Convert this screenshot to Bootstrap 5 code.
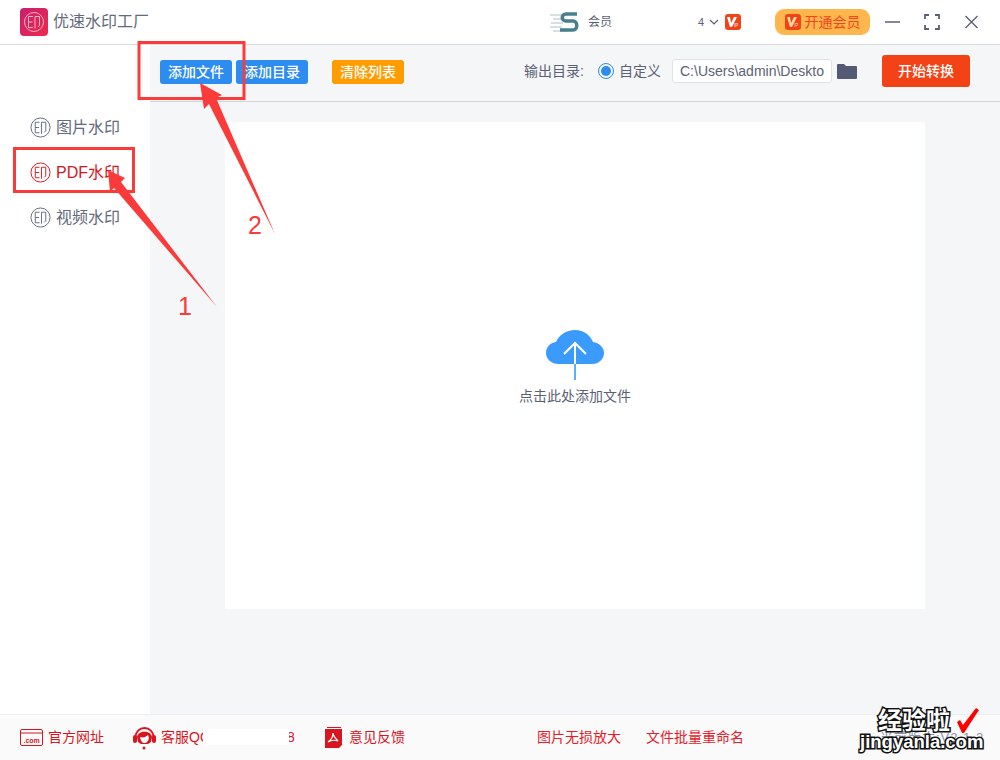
<!DOCTYPE html>
<html lang="zh-CN">
<head>
    <meta charset="UTF-8">
    <meta name="viewport" content="width=device-width, initial-scale=1.0">
    <title>优速水印工厂</title>
    <link rel="stylesheet" href="https://cdn.jsdelivr.net/npm/bootstrap@5.3.0/dist/css/bootstrap.min.css">
    <style>
        html, body { margin: 0; height: 760px; overflow: hidden; }
        body {
            position: relative;
            width: 1000px;
            font-family: "Liberation Sans", "Noto Sans CJK SC", sans-serif;
            color: #5a6175;
            background: #fff;
        }
        .app-frame { width: 1000px; height: 760px; }
        .title-bar { height: 45px; border-bottom: 1px solid #dcdcdc; padding-left: 20px; }
        .app-logo {
            width: 28px; height: 28px; border-radius: 4px;
            background: linear-gradient(135deg, #c81f6e, #ee2a4e);
        }
        .app-name { font-size: 16px; margin-left: 5px; width: 497px; color: #626a7c; }
        .member-name { font-size: 12px; margin-left: 8px; width: 110px; }
        .member-count { font-size: 11px; width: 7px; }
        .vip-small { margin-left: 6px; }
        .vip-chip {
            width: 95px; height: 26px; border-radius: 9px; margin-left: 34px;
            background: #ffb64d; color: #f2451c; font-size: 14px;
        }
        .win-btns { margin-left: 15px; gap: 24px; }
        .main-row { height: 669px; }
        .side-menu { width: 150px; padding-top: 60px; }
        .menu-entry { height: 45px; padding-left: 30px; font-size: 16px; gap: 5px; color: #626a7c; }
        .menu-entry.is-on { color: #d8161f; }
        .work-area { width: 850px; background: #f5f6f8; }
        .tool-row { height: 57px; border-bottom: 1px solid #d4d4d4; padding: 0 30px 2px 10px; }
        .tool-btn {
            height: 24px; width: 72px; padding: 0; border: 0; border-radius: 3px;
            color: #fff; font-size: 14px; font-weight: 500; line-height: 24px;
        }
        .tool-blue { background: #2d8cf0; }
        .tool-orange { background: #ff9c00; margin-left: 24px; }
        .out-group { margin-left: 120px; margin-bottom: 2px; }
        .out-label { font-size: 14px; width: 63px; }
        .out-radio {
            width: 16px; height: 16px; border-radius: 50%; border: 1px solid #2d8cf0;
            margin-left: 11px; margin-right: 5px;
        }
        .out-radio span { width: 10px; height: 10px; border-radius: 50%; background: #2d8cf0; }
        .out-kind { font-size: 14px; }
        .path-box {
            width: 160px; height: 24px; margin-left: 11px; padding-left: 7px;
            border: 1px solid #dfe1e6; border-radius: 3px; background: #fff;
            font-size: 14px; line-height: 22px; overflow: hidden; white-space: nowrap;
        }
        .folder-icon { margin-left: 5px; }
        .go-btn {
            width: 88px; height: 32px; padding: 0; border: 0; border-radius: 3px;
            margin-left: 25px; background: #f24216; color: #fff; font-size: 14px; font-weight: 500;
        }
        .drop-wrap { padding: 20px 0 0 75px; }
        .drop-panel { width: 700px; height: 487px; padding-top: 6px; background: #fff; }
        .drop-hint { font-size: 14px; line-height: 21px; margin-top: 6px; }
        .foot-row {
            height: 46px; background: #fafafa; border-top: 1px solid #eceef2;
            padding-left: 20px; font-size: 14px; color: #d8161f;
        }
        .foot-item { gap: 5px; }
        .foot-site { width: 113px; }
        .foot-qq { width: 191px; }
        .foot-feedback { width: 213px; }
        .foot-link { color: #e4212b; }
        .foot-resize { width: 109px; }
        .qq-mask { position: absolute; left: 203px; top: 729px; width: 86px; height: 16px; background: #fff; }
        .version { position: absolute; left: 880px; top: 728px; font-size: 13px; color: #8a93a8; letter-spacing: 1px; }
        .overlay { position: absolute; left: 0; top: 0; pointer-events: none; }
        .step-no { position: absolute; color: #f83c3c; font-size: 25px; line-height: 1; }
        .step-one { left: 178px; top: 294px; }
        .step-two { left: 248px; top: 213px; }
        .wm-cn, .wm-en {
            position: absolute; font-weight: 700; line-height: 1; white-space: nowrap;
            color: #fff; -webkit-text-stroke: 3px #111; paint-order: stroke fill;
        }
        .wm-cn { left: 878px; top: 709px; font-size: 24px; }
        .wm-en { left: 860px; top: 733px; font-size: 18.500px; }
    </style>
</head>
<body>
<div class="app-frame d-flex flex-column">

    <!-- title bar -->
    <div class="title-bar d-flex align-items-center flex-shrink-0">
        <div class="app-logo d-flex align-items-center justify-content-center flex-shrink-0">
            <svg width="22" height="22" viewBox="0 0 22 22" fill="none" stroke="#f6b3c0" stroke-width="1"><circle cx="11" cy="11" r="9.5"/><path d="M10 5.5H5.5v11H10M5.5 11H9.500M12 5.500h4.500v9l-1.500 1.500M12 5.500v12"/></svg>
        </div>
        <div class="app-name">优速水印工厂</div>
        <svg width="30" height="24" viewBox="0 0 30 24" class="flex-shrink-0">
            <path d="M0 5h14M3 9h9M1 13h12M0 17h12M3 21h14" stroke="#c9d6d8" stroke-width="1.500"/>
            <path d="M27 4H16c-5 0-5 7 0 7h7c5 0 5 9 0 9H10" fill="none" stroke="#47808c" stroke-width="3.500"/>
        </svg>
        <div class="member-name">会员</div>
        <span class="member-count">4</span>
        <svg width="10" height="6" viewBox="0 0 10 6" class="ms-1 flex-shrink-0" fill="none" stroke="#5a6175" stroke-width="1.2"><path d="M1 1l4 4 4-4"/></svg>
        <svg width="16" height="16" viewBox="0 0 16 16" class="vip-small flex-shrink-0"><rect width="16" height="16" rx="3" fill="#f24216"/><path d="M2 3h3l1 6 3-6h3L7 13H5z" fill="#fff"/><text x="9" y="13" font-size="4.500" fill="#fff" font-family="Liberation Sans">IP</text></svg>
        <div class="vip-chip d-flex align-items-center justify-content-center gap-1 flex-shrink-0">
            <svg width="16" height="16" viewBox="0 0 16 16"><rect width="16" height="16" rx="3" fill="#f24216"/><path d="M2 3h3l1 6 3-6h3L7 13H5z" fill="#ffd8a0"/><text x="9" y="13" font-size="4.500" fill="#ffd8a0" font-family="Liberation Sans">IP</text></svg>
            <span>开通会员</span>
        </div>
        <div class="win-btns d-flex align-items-center">
            <svg width="15" height="14" viewBox="0 0 15 14" stroke="#5a6175" stroke-width="1.5"><path d="M0 7h15"/></svg>
            <svg width="16" height="16" viewBox="0 0 16 16" fill="none" stroke="#5a6175" stroke-width="1.8"><path d="M1 5V1h4M11 1h4v4M15 11v4h-4M5 15H1v-4"/></svg>
            <svg width="15" height="14" viewBox="0 0 15 14" fill="none" stroke="#5a6175" stroke-width="1.4"><path d="M1.500 1l12 12M13.500 1l-12 12"/></svg>
        </div>
    </div>

    <div class="main-row d-flex flex-shrink-0">
        <!-- left menu -->
        <div class="side-menu flex-shrink-0">
            <div class="menu-entry d-flex align-items-center">
                <svg width="21" height="21" viewBox="0 0 22 22" fill="none" stroke="currentColor" stroke-width="1"><circle cx="11" cy="11" r="10"/><path d="M10 5.500H5.500v11H10M5.500 11H9.500M12 5.500h4.500v9l-1.500 1.500M12 5.500v12"/></svg>
                <span>图片水印</span>
            </div>
            <div class="menu-entry is-on d-flex align-items-center">
                <svg width="21" height="21" viewBox="0 0 22 22" fill="none" stroke="currentColor" stroke-width="1"><circle cx="11" cy="11" r="10"/><path d="M10 5.500H5.500v11H10M5.500 11H9.500M12 5.500h4.500v9l-1.500 1.500M12 5.500v12"/></svg>
                <span>PDF水印</span>
            </div>
            <div class="menu-entry d-flex align-items-center">
                <svg width="21" height="21" viewBox="0 0 22 22" fill="none" stroke="currentColor" stroke-width="1"><circle cx="11" cy="11" r="10"/><path d="M10 5.500H5.500v11H10M5.500 11H9.500M12 5.500h4.500v9l-1.500 1.500M12 5.500v12"/></svg>
                <span>视频水印</span>
            </div>
        </div>

        <div class="work-area d-flex flex-column">
            <!-- toolbar -->
            <div class="tool-row d-flex align-items-center flex-shrink-0">
                <button class="tool-btn tool-blue flex-shrink-0" type="button">添加文件</button>
                <button class="tool-btn tool-blue flex-shrink-0 ms-1" type="button">添加目录</button>
                <button class="tool-btn tool-orange flex-shrink-0" type="button">清除列表</button>
                <div class="out-group d-flex align-items-center flex-shrink-0">
                    <span class="out-label flex-shrink-0">输出目录:</span>
                    <span class="out-radio d-flex align-items-center justify-content-center flex-shrink-0"><span></span></span>
                    <span class="out-kind flex-shrink-0">自定义</span>
                    <div class="path-box flex-shrink-0">C:\Users\admin\Deskto</div>
                    <svg width="20" height="15" viewBox="0 0 20 15" class="folder-icon flex-shrink-0"><path d="M1 0h6l2 2h10a1 1 0 0 1 1 1v11a1 1 0 0 1-1 1H1a1 1 0 0 1-1-1V1a1 1 0 0 1 1-1z" fill="#525a75"/></svg>
                    <button class="go-btn flex-shrink-0" type="button">开始转换</button>
                </div>
            </div>
            <!-- drop zone -->
            <div class="drop-wrap flex-grow-1">
                <div class="drop-panel d-flex flex-column align-items-center justify-content-center">
                    <svg width="58" height="50" viewBox="0 0 58 50">
                        <path d="M13 34C5 34 0 29 0 23c0-6 4-10 10-11C13 5 20 0 29 0c9 0 15 5 18 12 6 1 11 5 11 11 0 6-5 11-12 11z" fill="#3a9bfc"/>
                        <path d="M29 34V13M18 24l11-11 11 11" fill="none" stroke="#fff" stroke-width="2"/>
                        <path d="M29 34v16" stroke="#5aaefc" stroke-width="2"/>
                    </svg>
                    <div class="drop-hint">点击此处添加文件</div>
                </div>
            </div>
        </div>
    </div>

    <!-- footer -->
    <div class="foot-row d-flex align-items-center flex-shrink-0">
        <div class="foot-item foot-site d-flex align-items-center">
            <svg width="23" height="17" viewBox="0 0 23 17" fill="none" stroke="#d8161f"><rect x=".5" y=".5" width="22" height="16" rx="1.500"/><path d="M1 4h21"/><text x="3.500" y="13.500" font-size="7" font-weight="700" fill="#d8161f" stroke="none" font-family="Liberation Sans">.com</text></svg>
            <span>官方网址</span>
        </div>
        <div class="foot-item foot-qq d-flex align-items-center">
            <svg width="23" height="25" viewBox="0 0 23 25">
                <path d="M2.500 12a9 9 0 0 1 18 0" fill="none" stroke="#d8161f" stroke-width="2"/>
                <path d="M4 12c1-7 14-7 15 0l-1 5-3 2H8l-3-2z" fill="#d8161f"/>
                <path d="M7 12c3 1 6 0 8-2l1 3c-1 4-3 5-4.500 5S8 17 7 12z" fill="#fff"/>
                <rect x="0" y="10" width="4" height="8" rx="2" fill="#d8161f"/>
                <rect x="19" y="10" width="4" height="8" rx="2" fill="#d8161f"/>
                <circle cx="11" cy="23" r="1.500" fill="#d8161f"/>
            </svg>
            <span>客服QQ：000000008</span>
        </div>
        <div class="foot-item foot-feedback d-flex align-items-center">
            <svg width="20" height="22" viewBox="0 0 20 22">
                <path d="M1 2h13l4 0v16l-3 3H1z" fill="#d8161f"/>
                <path d="M3 0h14v1H3z" fill="#d8161f"/>
                <path d="M9 6c0 3-2 7-5 9 3-2 7-2 10-1-2-2-5-5-5-8z" fill="none" stroke="#fff" stroke-width="1.200"/>
            </svg>
            <span>意见反馈</span>
        </div>
        <div class="foot-link foot-resize">图片无损放大</div>
        <div class="foot-link">文件批量重命名</div>
    </div>
</div>

<div class="qq-mask"></div>
<div class="version">当前版本:V2.1.2</div>

<!-- tutorial marks drawn over the screenshot -->
<svg class="overlay" width="1000" height="760" viewBox="0 0 1000 760">
    <rect x="139" y="42.500" width="105" height="56" fill="none" stroke="#fb3a3a" stroke-width="3"/>
    <rect x="14.500" y="148.500" width="119" height="43" fill="none" stroke="#fb3a3a" stroke-width="3"/>
    <path d="M200 83L222 95 216 98 275 234 209 104 204 109z" fill="#fb3a3a"/>
    <path d="M108 170L125 178 121 182 217 307 114 188 110 192z" fill="#fb3a3a"/>
    <path d="M957 722l3-2 3 5 13-17 3 2-15 23h-2z" fill="#f00"/>
</svg>
<span class="step-no step-one">1</span>
<span class="step-no step-two">2</span>
<div class="wm-cn">经验啦</div>
<div class="wm-en">jingyanla.com</div>

<script src="https://cdn.jsdelivr.net/npm/bootstrap@5.3.0/dist/js/bootstrap.bundle.min.js"></script>
</body>
</html>
